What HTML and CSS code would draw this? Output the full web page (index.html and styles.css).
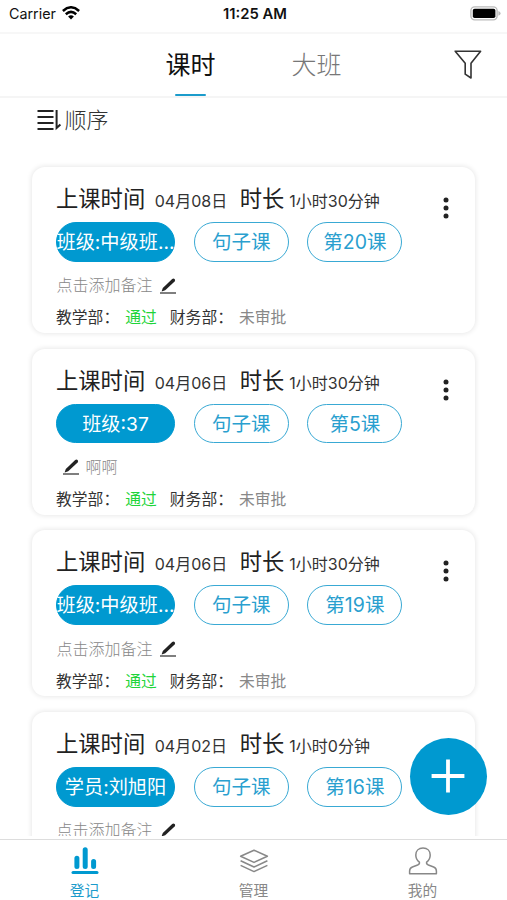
FILE: index.html
```
<!DOCTYPE html>
<html lang="zh-CN">
<head>
  <meta charset="UTF-8">
  <meta name="viewport" content="width=device-width, initial-scale=1.0">
  <title>课时登记</title>
  <link rel="stylesheet" href="styles.css">
</head>
<body>
  <svg class="icon-defs">
    <symbol id="icon-edit" viewBox="0 0 16 16">
      <path d="M1.6 13.4 L2.8 10 L12.2 1 Q13.4 0 14.6 1 Q15.6 2.2 14.6 3.4 L5.2 12.2 Z" fill="#222"/>
      <path d="M0 15 H16" stroke="#555" stroke-width="1.5"/>
    </symbol>
    <symbol id="icon-more" viewBox="0 0 6 22">
      <circle cx="3" cy="3" r="2.5"/>
      <circle cx="3" cy="11" r="2.5"/>
      <circle cx="3" cy="19" r="2.5"/>
    </symbol>
  </svg>

  <div class="status-bar">
    <div class="carrier">
      <span>Carrier</span>
      <svg width="18" height="14" viewBox="0 0 18 14" fill="none" stroke="#000" stroke-width="2.5">
        <path d="M.9 5 Q9 -2.4 17.1 5"/>
        <path d="M3.8 8.2 Q9 3.6 14.2 8.2"/>
        <path d="M9 13.4 L6.1 10.4 Q9 8.2 11.9 10.4 Z" fill="#000" stroke="none"/>
      </svg>
    </div>
    <div class="clock">11:25 AM</div>
    <svg class="battery" width="31" height="15" viewBox="0 0 31 15">
      <rect x=".9" y=".9" width="26.2" height="13" rx="3.8" fill="#fff" stroke="#bbb" stroke-width="1.4"/>
      <rect x="2.8" y="2.7" width="22.6" height="9.4" rx="1.8"/>
      <path d="M28.4 5 Q30.6 6 30.6 7.4 Q30.6 8.8 28.4 9.8 Z" fill="#bbb"/>
    </svg>
  </div>

  <div class="tabs">
    <div class="tab active">课时</div>
    <div class="tab">大班</div>
    <svg class="filter" width="28" height="30" viewBox="0 0 28 30" fill="none" stroke="#333" stroke-width="1.6" stroke-linejoin="round">
      <path d="M1.2 1.2 H26.6 L17 13.2 V28 L11.2 24.2 V13.2 Z"/>
    </svg>
  </div>

  <div class="content">
    <div class="sort">
      <svg width="26" height="22" viewBox="0 0 26 22" fill="none" stroke="#222" stroke-width="1.9">
        <path d="M.5 2 H16.5 M.5 8 H16.5 M.5 14 H16.5 M.5 20 H16.5"/>
        <path d="M19.6 1 V19 L23.4 15.4" stroke-width="2"/>
      </svg>
      <span>顺序</span>
    </div>

    <div class="card">
      <div class="card-title"><b>上课时间</b><span class="date">04月08日</span><b>时长</b><span>1小时30分钟</span></div>
      <div class="pills">
        <div class="pill filled"><span>班级:中级班...</span></div>
        <div class="pill">句子课</div>
        <div class="pill">第20课</div>
      </div>
      <div class="note"><span>点击添加备注</span><svg class="edit"><use href="#icon-edit"/></svg></div>
      <div class="review">教学部：<span class="pass">通过</span>财务部：<span class="wait">未审批</span></div>
      <svg class="more"><use href="#icon-more"/></svg>
    </div>

    <div class="card">
      <div class="card-title"><b>上课时间</b><span class="date">04月06日</span><b>时长</b><span>1小时30分钟</span></div>
      <div class="pills">
        <div class="pill filled"><span>班级:37</span></div>
        <div class="pill">句子课</div>
        <div class="pill">第5课</div>
      </div>
      <div class="note written"><svg class="edit"><use href="#icon-edit"/></svg><span>啊啊</span></div>
      <div class="review">教学部：<span class="pass">通过</span>财务部：<span class="wait">未审批</span></div>
      <svg class="more"><use href="#icon-more"/></svg>
    </div>

    <div class="card">
      <div class="card-title"><b>上课时间</b><span class="date">04月06日</span><b>时长</b><span>1小时30分钟</span></div>
      <div class="pills">
        <div class="pill filled"><span>班级:中级班...</span></div>
        <div class="pill">句子课</div>
        <div class="pill">第19课</div>
      </div>
      <div class="note"><span>点击添加备注</span><svg class="edit"><use href="#icon-edit"/></svg></div>
      <div class="review">教学部：<span class="pass">通过</span>财务部：<span class="wait">未审批</span></div>
      <svg class="more"><use href="#icon-more"/></svg>
    </div>

    <div class="card">
      <div class="card-title"><b>上课时间</b><span class="date">04月02日</span><b>时长</b><span>1小时0分钟</span></div>
      <div class="pills">
        <div class="pill filled"><span>学员:刘旭阳</span></div>
        <div class="pill">句子课</div>
        <div class="pill">第16课</div>
      </div>
      <div class="note"><span>点击添加备注</span><svg class="edit"><use href="#icon-edit"/></svg></div>
    </div>
  </div>

  <div class="tab-bar">
    <div class="tab-item active">
      <svg width="28" height="28" viewBox="0 0 28 28" fill="none" stroke="#0099d0" stroke-linecap="round">
        <path d="M5.9 11.2 V19.4 M14.2 2.8 V19.4 M22.6 14.6 V19.4" stroke-width="5"/>
        <path d="M2 25.6 H26" stroke-width="3"/>
      </svg>
      <span>登记</span>
    </div>
    <div class="tab-item">
      <svg width="30" height="28" viewBox="0 0 30 28" fill="none" stroke="#888" stroke-width="1.5" stroke-linejoin="round">
        <path d="M15 3.2 L28.4 9.2 L15 15.4 L1.6 9.2 Z"/>
        <path d="M1.6 13.8 L15 20 L28.4 13.8 M1.6 18.4 L15 24.6 L28.4 18.4"/>
      </svg>
      <span>管理</span>
    </div>
    <div class="tab-item">
      <svg width="30" height="28" viewBox="0 0 30 28" fill="none" stroke="#888" stroke-width="1.5" stroke-linejoin="round">
        <path d="M15 1 C10.6 1 7.8 4 7.8 8 C7.8 11 9.2 13.6 11.4 15.2 C11.8 16.8 11 17.4 9.6 18 L4.4 20 C2.4 20.8 1.6 22 1.6 24 V26.8 H28.4 V24 C28.4 22 27.6 20.8 25.6 20 L20.4 18 C19 17.4 18.2 16.8 18.6 15.2 C20.8 13.6 22.2 11 22.2 8 C22.2 4 19.4 1 15 1 Z"/>
      </svg>
      <span>我的</span>
    </div>
  </div>

  <div class="add-btn">
    <svg width="34" height="34" viewBox="0 0 34 34" stroke="#fff" stroke-width="3.8">
      <path d="M17 .6 V33.4 M.6 17 H33.4"/>
    </svg>
  </div>
</body>
</html>
```
FILE: styles.css
```
* {
  box-sizing: border-box;
}

body {
  margin: 0;
  height: 900px;
  display: flex;
  flex-direction: column;
  position: relative;
  overflow: hidden;
  background: #fff;
  color: #333;
  font-family: "Inter", "Noto Sans CJK SC", sans-serif;
}

svg {
  display: block;
  flex-shrink: 0;
}

.icon-defs {
  position: absolute;
  width: 0;
  height: 0;
}

/* status bar */
.status-bar {
  height: 34px;
  padding: 0 6px 6px 9px;
  display: grid;
  grid-template-columns: 1fr auto 1fr;
  align-items: center;
  border-bottom: 2px solid #f7f7f7;
  font-size: 14.3px;
  color: #111;
}

.carrier {
  display: flex;
  align-items: center;
  gap: 6px;
}

.clock {
  padding-top: 1px;
  font-size: 14.8px;
  font-weight: 600;
}

.battery {
  justify-self: end;
}

/* top tabs */
.tabs {
  height: 64px;
  display: flex;
  justify-content: center;
  gap: 76px;
  position: relative;
  border-bottom: 2px solid #f5f5f5;
}

.tab {
  width: 50px;
  font-size: 25px;
  line-height: 62px;
  color: #777;
  font-weight: 300;
  white-space: nowrap;
}

.tab.active {
  color: #111;
  font-weight: 400;
  position: relative;
}

.tab.active::after {
  content: "";
  position: absolute;
  left: 9.5px;
  bottom: 0;
  width: 31px;
  height: 2.5px;
  border-radius: 2px;
  background: #1b9bcb;
}

.filter {
  position: absolute;
  right: 25.5px;
  top: 15.5px;
}

/* list */
.content {
  height: 738px;
  padding: 0 32px;
  overflow: hidden;
}

.sort {
  height: 44px;
  margin: 0 0 25px 4.5px;
  padding-bottom: 4px;
  display: flex;
  align-items: center;
  gap: 2px;
  font-size: 22px;
  font-weight: 300;
}

.sort svg {
  margin-top: 4px;
}

.card {
  position: relative;
  height: 166px;
  margin-bottom: 15.7px;
  padding: 15px 24px 0;
  border-radius: 13px;
  background: #fff;
  box-shadow: 0 0 5px 1px rgba(0, 0, 0, 0.09);
}

.card-title {
  display: flex;
  align-items: baseline;
  height: 34px;
  line-height: 34px;
  font-size: 16px;
  white-space: nowrap;
}

.card-title b {
  font-size: 22.3px;
  font-weight: 400;
  margin-right: 5px;
  color: #222;
}

.card-title .date {
  width: 85px;
  margin: 0 0 0 4.5px;
}

.pills {
  display: flex;
  gap: 18.7px;
  margin-top: 6px;
}

.pill {
  width: 95px;
  height: 39.5px;
  line-height: 39px;
  border: 1.5px solid #39a9d4;
  border-radius: 20px;
  color: #2a9fcf;
  font-size: 19.5px;
  text-align: center;
  white-space: nowrap;
}

.pill.filled {
  width: 119px;
  display: flex;
  justify-content: center;
  border-color: #0099d0;
  background: #0099d0;
  color: #fff;
  font-size: 19.2px;
}

.note {
  display: flex;
  align-items: center;
  gap: 7px;
  height: 24px;
  margin-top: 10.8px;
  padding-left: 0.6px;
  font-size: 16px;
  font-weight: 300;
  color: #888;
}

.note.written {
  padding-left: 6.6px;
}

.edit {
  width: 16px;
  height: 16px;
  margin-top: 3px;
}

.review {
  display: flex;
  height: 24px;
  line-height: 24px;
  margin-top: 10px;
  font-size: 15.8px;
  white-space: nowrap;
}

.pass {
  margin: 0 13px 0 6px;
  color: #1fd43a;
}

.wait {
  margin-left: 6px;
  color: #888;
}

.more {
  position: absolute;
  top: 30px;
  right: 26px;
  width: 6px;
  height: 22px;
  fill: #222;
}

/* bottom bar */
.tab-bar {
  height: 61px;
  margin-top: 3px;
  padding-top: 7px;
  display: flex;
  border-top: 1.5px solid #ddd;
}

.tab-item {
  flex: 1;
  display: flex;
  flex-direction: column;
  align-items: center;
  font-size: 14.7px;
  line-height: 32px;
  color: #888;
}

.tab-item.active {
  color: #1b9bcb;
}

.add-btn {
  position: absolute;
  left: 409.5px;
  top: 737.5px;
  width: 77.5px;
  height: 77.5px;
  border-radius: 50%;
  display: flex;
  align-items: center;
  justify-content: center;
  background: #0099d0;
}
```
